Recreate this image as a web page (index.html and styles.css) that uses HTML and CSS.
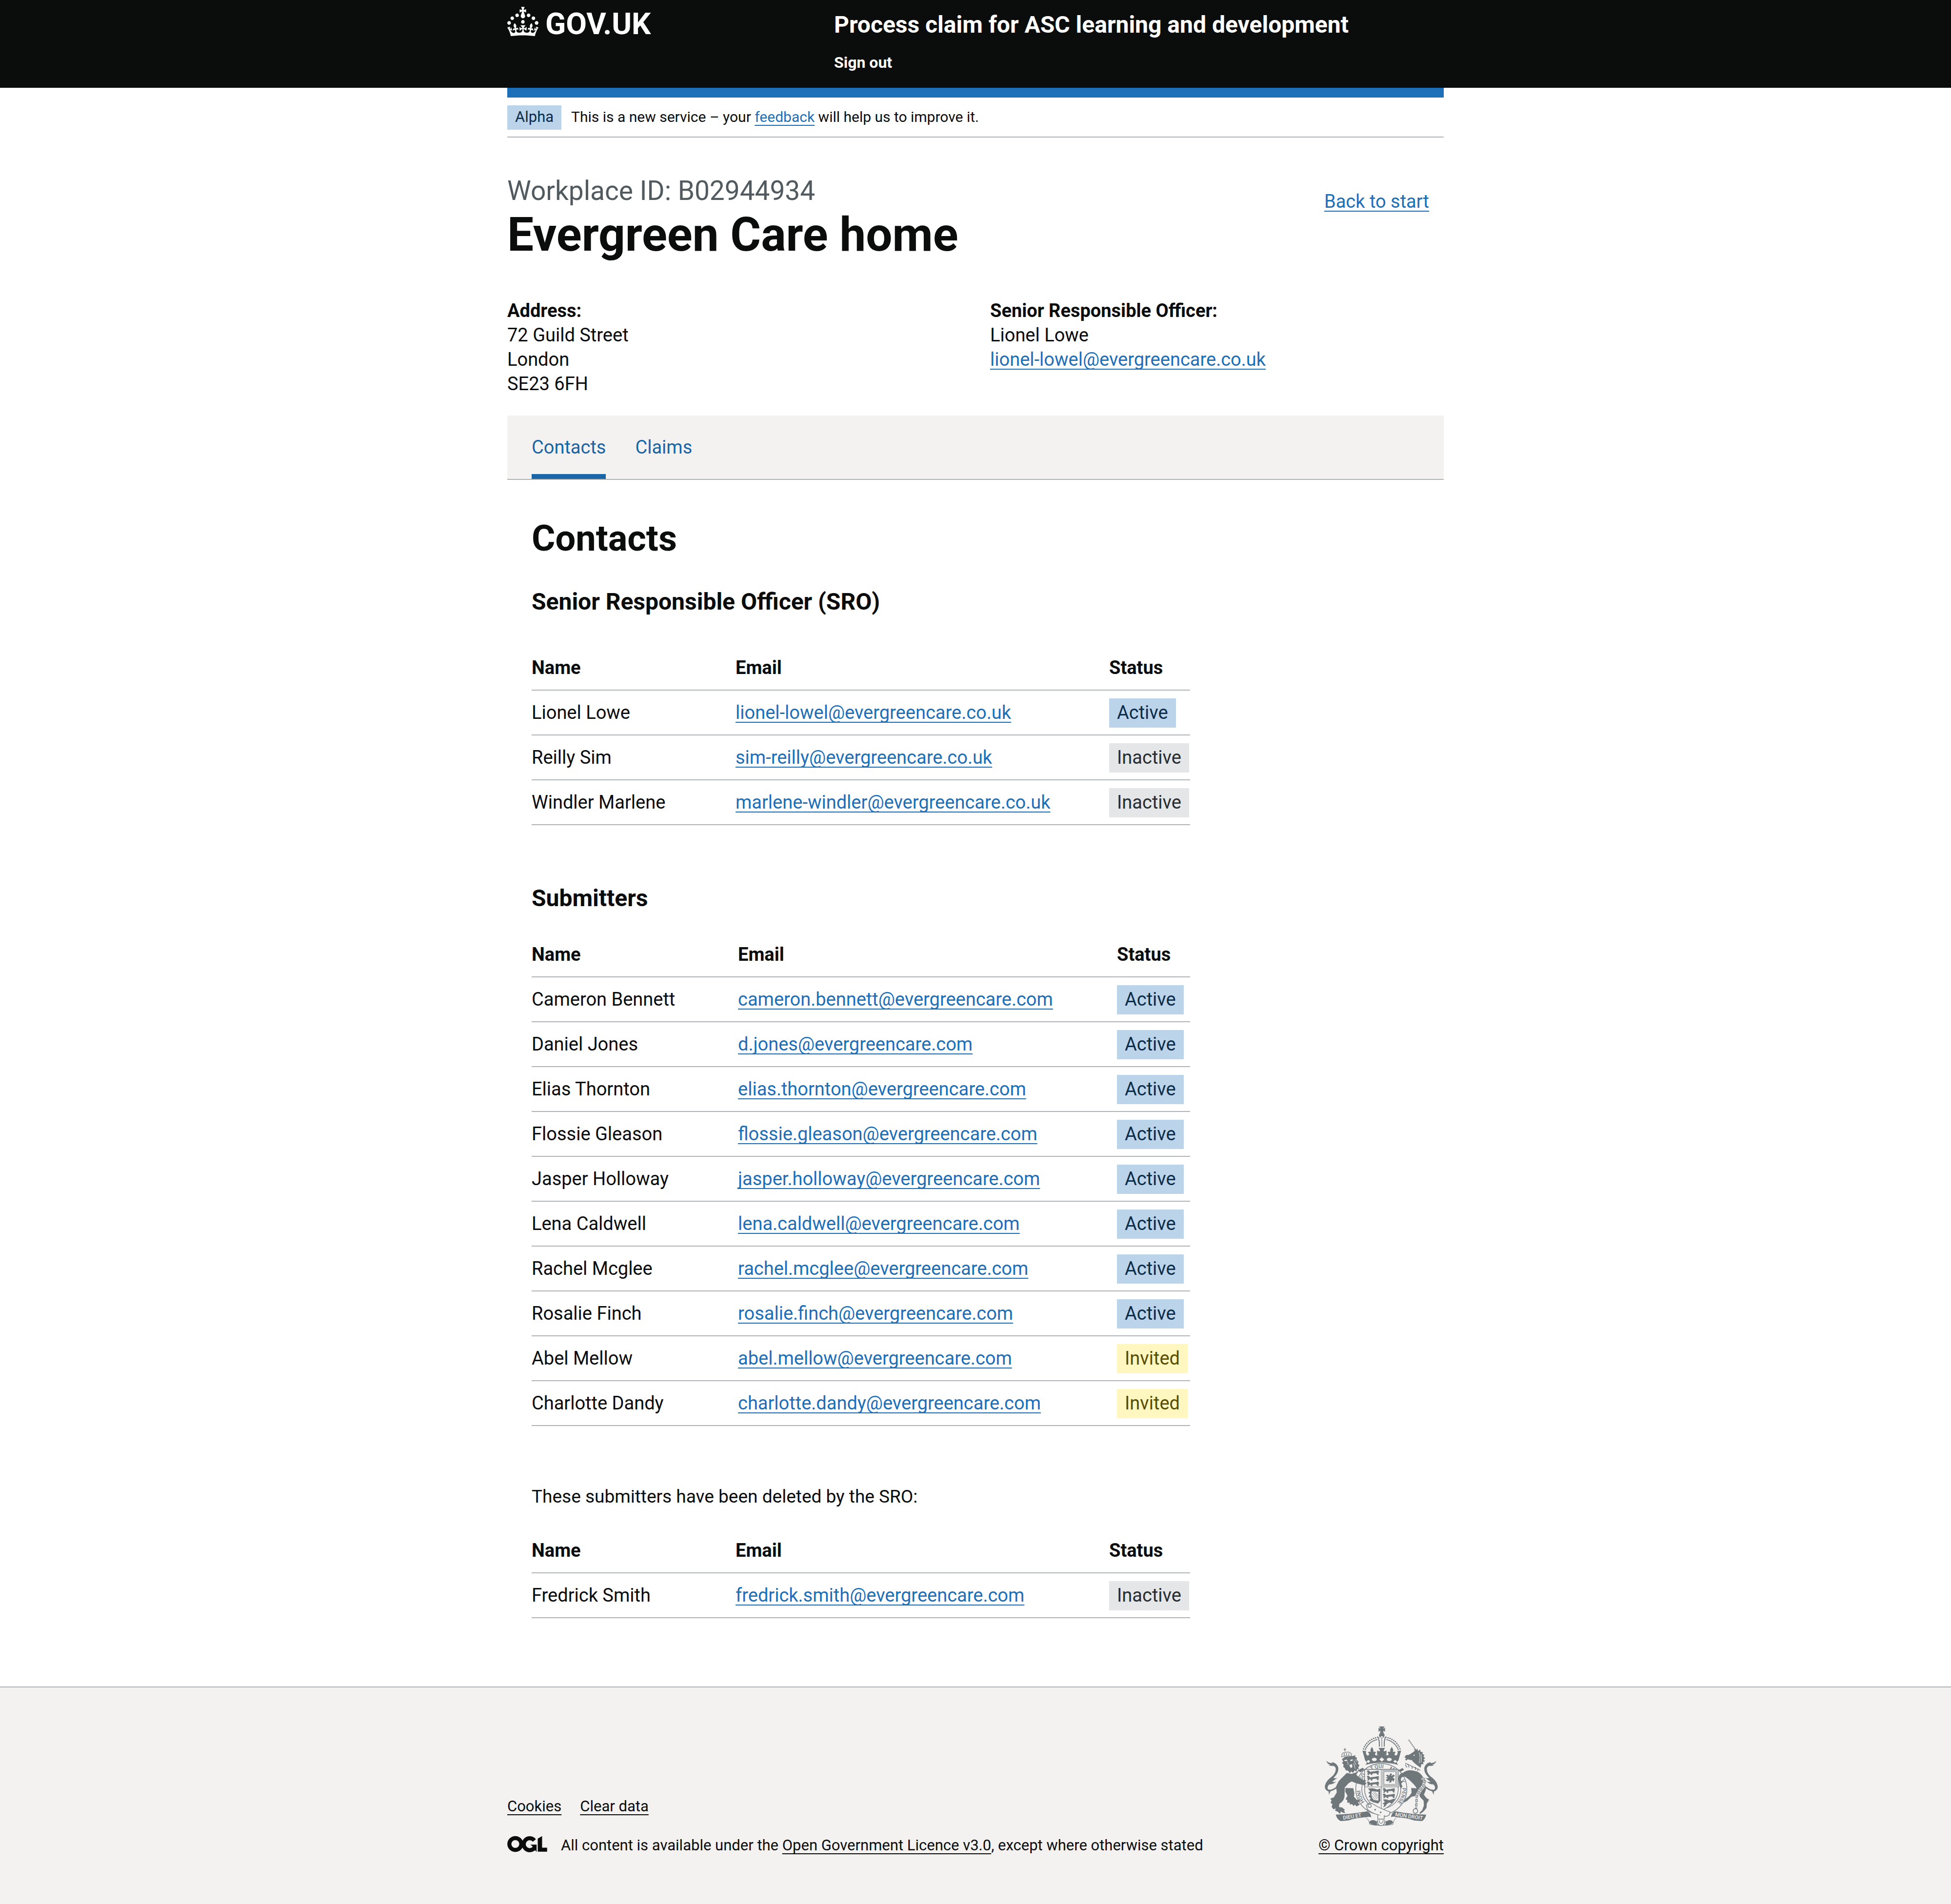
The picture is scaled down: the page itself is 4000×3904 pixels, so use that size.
FILE: index.html
```html
<!DOCTYPE html>
<html lang="en">
<head>
<meta charset="utf-8">
<meta name="viewport" content="width=device-width, initial-scale=1">
<title>Contacts – Process claim for ASC learning and development</title>
<link rel="stylesheet" href="styles.css">
</head>
<body>
<header class="header">
  <div class="container header-inner">
    <a class="logo" href="#">
      <svg class="logo-crown" viewBox="0 0 32 30" aria-hidden="true"><path fill="currentColor" fill-rule="evenodd" d="M22.6 10.4c-1 .4-2-.1-2.4-1-.4-.9.1-2 1-2.4.9-.4 2 .1 2.4 1s-.1 2-1 2.4m-5.9 6.7c-.9.4-2-.1-2.4-1-.4-.9.1-2 1-2.4.9-.4 2 .1 2.4 1s-.1 2-1 2.4m10.8-3.7c-1 .4-2-.1-2.4-1-.4-.9.1-2 1-2.4.9-.4 2 .1 2.4 1s0 2-1 2.4m3.3 4.8c-1 .4-2-.1-2.4-1-.4-.9.1-2 1-2.4.9-.4 2 .1 2.4 1s-.1 2-1 2.4M17 4.7l2.3 1.2V2.5l-2.3.7-.2-.2.9-3h-3.4l.9 3-.2.2c-.1.1-2.3-.7-2.3-.7v3.4L15 4.7c.1.1.1.2.2.2l-1.3 4c-.1.2-.1.4-.1.6 0 1.1.8 2 1.9 2.2h.7c1-.2 1.9-1.1 1.9-2.1 0-.2 0-.4-.1-.6l-1.3-4c-.1-.2 0-.2.1-.3m-7.6 5.7c.9.4 2-.1 2.4-1 .4-.9-.1-2-1-2.4-.9-.4-2 .1-2.4 1s0 2 1 2.4m-5 3c.9.4 2-.1 2.4-1 .4-.9-.1-2-1-2.4-.9-.4-2 .1-2.4 1s.1 2 1 2.4m-3.2 4.8c.9.4 2-.1 2.4-1 .4-.9-.1-2-1-2.4-.9-.4-2 .1-2.4 1s0 2 1 2.4m14.8 11c4.4 0 8.6.3 12.3.8 1.1-4.5 2.4-7 3.7-8.8l-2.5-.9c.2 1.3.3 1.9 0 2.7-.4-.4-.8-1.1-1.1-2.3l-1.2 4c.7-.5 1.3-.8 2-.9-1.1 2.5-2.6 3.1-3.5 3-1.1-.2-1.7-1.2-1.5-2.1.3-1.2 1.5-1.5 2.1-.1 1.1-2.3-.8-3-2-2.3 1.9-1.9 2.1-3.5.6-5.6-2.1 1.6-2.1 3.2-1.2 5.5-1.2-1.4-3.2-.6-2.5 1.6.9-1.4 2.1-.5 1.9.8-.2 1.1-1.7 2.1-3.5 1.9-2.7-.2-2.9-2.1-2.9-3.6.7-.1 1.9.5 2.9 1.9l.4-4.3c-1.1 1.1-2.1 1.4-3.2 1.4.4-1.2 2.1-3 2.1-3h-5.4s1.7 1.9 2.1 3c-1.1 0-2.1-.2-3.2-1.4l.4 4.3c1-1.4 2.2-2 2.9-1.9-.1 1.5-.2 3.4-2.9 3.6-1.9.2-3.4-.8-3.5-1.9-.2-1.3 1-2.2 1.9-.8.7-2.3-1.2-3-2.5-1.6.9-2.2.9-3.9-1.2-5.5-1.5 2-1.3 3.7.6 5.6-1.2-.7-3.1 0-2 2.3.6-1.4 1.8-1.1 2.1.1.2.9-.3 1.9-1.5 2.1-.9.2-2.4-.5-3.5-3 .6 0 1.2.3 2 .9l-1.2-4c-.3 1.1-.7 1.9-1.1 2.3-.3-.8-.2-1.4 0-2.7l-2.9.9C1.3 23 2.6 25.5 3.7 30c3.7-.5 7.9-.8 12.3-.8"/></svg>
      <span class="logo-text">GOV.UK</span>
    </a>
    <div class="header-content">
      <a class="service-name" href="#">Process claim for ASC learning and development</a>
      <nav aria-label="Account"><a class="sign-out" href="#">Sign out</a></nav>
    </div>
  </div>
</header>

<div class="container">
  <div class="phase-banner">
    <strong class="tag tag-blue phase-tag">Alpha</strong>
    <span>This is a new service – your <a class="link" href="#">feedback</a> will help us to improve it.</span>
  </div>

  <main class="main">
    <div class="title-row">
      <div>
        <span class="caption">Workplace ID: B02944934</span>
        <h1 class="heading-xl">Evergreen Care home</h1>
      </div>
      <a class="link back-link" href="#">Back to start</a>
    </div>

    <div class="details">
      <address class="details-item"><strong>Address:</strong><br>72 Guild Street<br>London<br>SE23 6FH</address>
      <div class="details-item"><strong>Senior Responsible Officer:</strong><br>Lionel Lowe<br><a class="link" href="#">lionel-lowel@evergreencare.co.uk</a></div>
    </div>

    <nav class="tabs" aria-label="Workplace">
      <a class="tab tab-current" href="#" aria-current="page">Contacts</a>
      <a class="tab" href="#">Claims</a>
    </nav>

    <div class="panel">
      <h2 class="heading-l">Contacts</h2>

      <h3 class="heading-m heading-spaced">Senior Responsible Officer (SRO)</h3>
      <table class="table">
        <colgroup><col class="col-name"><col class="col-email"><col></colgroup>
        <thead><tr><th scope="col">Name</th><th scope="col">Email</th><th scope="col">Status</th></tr></thead>
        <tbody>
          <tr><td>Lionel Lowe</td><td><a class="link" href="#">lionel-lowel@evergreencare.co.uk</a></td><td><strong class="tag tag-blue">Active</strong></td></tr>
          <tr><td>Reilly Sim</td><td><a class="link" href="#">sim-reilly@evergreencare.co.uk</a></td><td><strong class="tag tag-grey">Inactive</strong></td></tr>
          <tr><td>Windler Marlene</td><td><a class="link" href="#">marlene-windler@evergreencare.co.uk</a></td><td><strong class="tag tag-grey">Inactive</strong></td></tr>
        </tbody>
      </table>

      <h3 class="heading-m">Submitters</h3>
      <table class="table table-submitters">
        <colgroup><col class="col-name"><col class="col-email"><col></colgroup>
        <thead><tr><th scope="col">Name</th><th scope="col">Email</th><th scope="col">Status</th></tr></thead>
        <tbody>
          <tr><td>Cameron Bennett</td><td><a class="link" href="#">cameron.bennett@evergreencare.com</a></td><td><strong class="tag tag-blue">Active</strong></td></tr>
          <tr><td>Daniel Jones</td><td><a class="link" href="#">d.jones@evergreencare.com</a></td><td><strong class="tag tag-blue">Active</strong></td></tr>
          <tr><td>Elias Thornton</td><td><a class="link" href="#">elias.thornton@evergreencare.com</a></td><td><strong class="tag tag-blue">Active</strong></td></tr>
          <tr><td>Flossie Gleason</td><td><a class="link" href="#">flossie.gleason@evergreencare.com</a></td><td><strong class="tag tag-blue">Active</strong></td></tr>
          <tr><td>Jasper Holloway</td><td><a class="link" href="#">jasper.holloway@evergreencare.com</a></td><td><strong class="tag tag-blue">Active</strong></td></tr>
          <tr><td>Lena Caldwell</td><td><a class="link" href="#">lena.caldwell@evergreencare.com</a></td><td><strong class="tag tag-blue">Active</strong></td></tr>
          <tr><td>Rachel Mcglee</td><td><a class="link" href="#">rachel.mcglee@evergreencare.com</a></td><td><strong class="tag tag-blue">Active</strong></td></tr>
          <tr><td>Rosalie Finch</td><td><a class="link" href="#">rosalie.finch@evergreencare.com</a></td><td><strong class="tag tag-blue">Active</strong></td></tr>
          <tr><td>Abel Mellow</td><td><a class="link" href="#">abel.mellow@evergreencare.com</a></td><td><strong class="tag tag-yellow">Invited</strong></td></tr>
          <tr><td>Charlotte Dandy</td><td><a class="link" href="#">charlotte.dandy@evergreencare.com</a></td><td><strong class="tag tag-yellow">Invited</strong></td></tr>
        </tbody>
      </table>

      <p class="body">These submitters have been deleted by the SRO:</p>
      <table class="table">
        <colgroup><col class="col-name"><col class="col-email"><col></colgroup>
        <thead><tr><th scope="col">Name</th><th scope="col">Email</th><th scope="col">Status</th></tr></thead>
        <tbody>
          <tr><td>Fredrick Smith</td><td><a class="link" href="#">fredrick.smith@evergreencare.com</a></td><td><strong class="tag tag-grey">Inactive</strong></td></tr>
        </tbody>
      </table>
    </div>
  </main>
</div>

<footer class="footer">
  <div class="container footer-inner">
    <div class="footer-meta">
      <nav class="footer-links" aria-label="Support links">
        <a class="footer-link" href="#">Cookies</a>
        <a class="footer-link" href="#">Clear data</a>
      </nav>
      <div class="licence">
        <svg class="ogl" viewBox="59 72 248 102" role="img" aria-label="Open Government Licence">
          <g fill="none" stroke="currentColor" stroke-width="25">
            <circle cx="109" cy="123" r="37"/>
            <path d="M227 101A37 37 0 1 0 230 143"/>
          </g>
          <path fill="currentColor" d="M203 127H241V172L231 161L219 168V141ZM248 90L275 74V146H306V171H248Z"/>
        </svg>
        <span>All content is available under the <a class="footer-link" href="#">Open Government Licence v3.0</a>, except where otherwise stated</span>
      </div>
    </div>
    <a class="copyright" href="#">
      <svg class="arms" viewBox="42 30 696 612" role="img" aria-label="Royal coat of arms">
        <defs>
          <path id="ring" d="M390 544A129 129 0 0 1 390 286A129 129 0 0 1 390 544"/>
          <path id="passant" d="M0 4C6-3 14-2 18 4L22 9C34 3 46 6 58 3L70 0L78 4L72 8L78 14L70 17L76 25L66 26L60 17C50 16 42 19 34 19L36 27L25 27L24 19C18 20 14 23 12 28L2 27L10 19L0 16L8 12Z"/>
          <g id="half-crown">
            <path d="M281 167Q302 110 368 96" fill="none" stroke="currentColor" stroke-width="9" stroke-linecap="round" stroke-dasharray="0 13"/>
            <path d="M290 176Q310 124 366 110" fill="none" stroke="currentColor" stroke-width="5"/>
            <path d="M372 96Q380 126 378 154" fill="none" stroke="currentColor" stroke-width="6"/>
            <path d="M274 178L298 182Q292 190 298 202Q304 214 314 204Q318 196 308 192Q314 180 326 188Q318 174 332 156Q346 174 340 188Q352 180 358 192Q348 196 352 204Q362 212 376 202L364 206V178L380 184Q384 174 372 162H393V252Q340 254 293 266L302 252L290 238Z"/>
            <ellipse cx="347" cy="233" rx="15" ry="10" class="arms-light"/>
            <path d="M298 246L310 236L322 244L312 254Z" class="arms-light"/>
          </g>
          <path id="tail" d="M52 240Q66 258 90 254L84 248Q112 252 124 278Q132 310 104 338L96 346Q108 352 122 346Q100 360 88 370Q98 374 112 368Q96 386 70 386Q54 400 62 416Q80 428 120 396L124 404Q98 424 78 428L68 450L66 430Q38 420 44 392Q52 362 84 340Q110 318 110 292Q108 272 92 272Q76 274 66 268L78 266Q56 262 52 240Z"/>
        </defs>
        <g fill="currentColor">
          <path d="M375 30H411Q402 38 401 44Q407 43 413 37V63Q407 57 401 56Q402 64 406 68H380Q384 64 385 56Q379 57 373 63V37Q379 43 385 44Q384 38 375 30Z"/>
          <circle cx="393" cy="84" r="17"/>
          <circle cx="393" cy="96" r="7" class="arms-light"/>
          <path d="M393 102V154" fill="none" stroke="currentColor" stroke-width="8" stroke-linecap="round" stroke-dasharray="0 12"/>
          <use href="#half-crown"/>
          <use href="#half-crown" transform="translate(786 0) scale(-1 1)"/>
          <path d="M393 220L408 233L393 246L378 233Z" class="arms-light"/>
          <use href="#tail"/>
          <use href="#tail" transform="translate(780 0) scale(-1 1)"/>
        </g>

        <g fill="none" stroke="currentColor" stroke-width="4">
          <circle cx="390" cy="415" r="157" class="arms-ground"/>
          <circle cx="390" cy="415" r="120"/>
        </g>
        <g class="arms-motto" fill="currentColor">
          <text><textPath href="#ring" startOffset="118">HONI</textPath></text>
          <text><textPath href="#ring" startOffset="256">SO</textPath></text>
          <text><textPath href="#ring" startOffset="340">T QUI</textPath></text>
          <text><textPath href="#ring" startOffset="454">M</textPath></text>
          <text><textPath href="#ring" startOffset="552">Y</textPath></text>
          <text><textPath href="#ring" startOffset="600">PENSE</textPath></text>
        </g>

        <path class="arms-ground" stroke="currentColor" stroke-width="4" d="M287 294H494V420Q490 500 390 548Q290 500 287 420Z"/>
        <g fill="none" stroke="currentColor" stroke-width="3">
          <path d="M390 294V548M287 402H494"/>
          <path d="M399 301H486V394H399ZM406 308H479V387H406Z"/>
        </g>
        <g fill="currentColor">
          <use href="#passant" x="300" y="301"/><use href="#passant" x="300" y="335"/><use href="#passant" x="300" y="369"/>
          <use href="#passant" x="398" y="410"/><use href="#passant" x="398" y="444"/>
          <path d="M400 480L416 478L440 484L468 474L476 480L462 492L456 504L438 498L424 508L416 520L402 528L408 510L398 504L412 494Z"/>
          <path d="M418 330L430 326L438 334L446 318L456 322L450 334L466 326L474 334L460 344L472 352L466 370L456 360L450 374L438 376L442 362L426 368L416 358L430 352L416 344L430 342Z"/>
          <path d="M308 412L338 410L366 418L384 412V488L370 504L340 496L316 484L326 472L312 462L322 448L310 438L322 428Z"/>
          <path class="arms-light" d="M332 428L372 432V486L344 482Q322 460 332 428Z"/>
          <path fill="none" stroke="currentColor" stroke-width="3" d="M334 440L366 478M342 434L370 468M352 434L370 456M330 454L354 480"/>
        </g>

        <g fill="currentColor">
          <path d="M148 232L166 216L212 212L232 206L228 216L240 222L238 234L250 246L246 258L256 270L248 280L252 294L240 292L238 308L226 300L216 316L206 306L196 318L186 302L172 300L164 284L156 280L158 264L148 254L156 246Z"/>
          <path class="arms-light" d="M160 238L176 234L184 240L168 244ZM198 236L212 232L216 238L202 244ZM194 266L210 262L212 280L204 286L196 276Z"/>
          <path d="M180 246Q190 256 184 266M222 240L236 268M228 232L244 250M220 256L230 290" class="arms-cut"/>
          <path d="M148 216Q144 190 166 192Q188 180 206 198L206 214Q176 206 148 216Z" fill="none" stroke="currentColor" stroke-width="6" stroke-dasharray="5 3"/>
          <path d="M166 162V184M158 172H174M176 194V208M162 196V210M190 196V208" stroke="currentColor" stroke-width="4"/>
          <path d="M178 316L206 322L232 314L254 298L236 326L256 346L280 360L298 362L290 372L300 382L290 386L294 396L280 390L262 386L232 378L208 368L190 378L166 404L164 446Q168 484 132 506L130 526L148 528L166 542L160 550L170 562L152 560L142 552L136 568L122 554L106 548L110 534L96 540L84 524L90 508L78 500L84 484L76 474L98 466L116 436L112 398L128 366Z"/>
          <path d="M170 408L218 410L224 440L222 462L240 482L262 480L254 492L246 498L258 510L238 522L228 510L220 520L210 508L196 510L194 496L182 502L180 482L170 478L182 456L168 430Z"/>
          <path d="M244 300L276 284L286 294L262 312Z"/>
        </g>

        <g fill="currentColor">
          <path d="M558 112L602 174" stroke="currentColor" stroke-width="6" stroke-dasharray="8 3"/>
          <path d="M596 180L590 168L604 174L612 166L616 182L628 172L632 186L646 188L642 198L656 206L648 214L660 226L650 232L658 244L646 250L650 262L636 262L632 284Q604 266 584 246Q578 234 568 236L552 232L544 240L536 232L544 226L532 220L542 206L560 204L580 192Z"/>
          <circle cx="592" cy="207" r="4" class="arms-light"/>
          <path d="M622 190Q634 220 622 256M634 200Q642 224 634 252" class="arms-cut"/>
          <path d="M538 256L630 300M538 266L548 284M556 262L560 284M578 272L580 290M600 280L600 296M616 288L612 302" fill="none" stroke="currentColor" stroke-width="6" stroke-dasharray="7 3"/>
          <path d="M494 300L520 286L530 296L510 308Z"/>
          <path d="M496 360Q490 322 524 314Q552 292 590 302L614 308Q640 324 650 350L662 380L664 420L652 450L668 470L684 480L670 504L668 530L654 548L640 560L628 568L624 562L642 544L652 516L650 486L630 466L616 436Q612 410 590 386Q556 350 534 338Q508 338 510 362L522 372L512 382L520 398L512 412L502 398Z"/>
          <path d="M574 408L616 412L628 440L610 456L576 462L548 488L524 500L538 476L562 458L576 438Z"/>
        </g>
        <path d="M640 344L660 360L650 396L630 420L608 460L604 536" fill="none" class="arms-chain-ground"/>
        <path d="M640 344L660 360L650 396L630 420L608 460L604 536" fill="none" stroke="currentColor" stroke-width="13" stroke-dasharray="20 6"/>
        <path d="M640 344L660 360L650 396L630 420L608 460L604 536" fill="none" class="arms-chain-hole"/>
        <circle cx="600" cy="550" r="14" fill="none" stroke="currentColor" stroke-width="5"/>

        <path class="arms-ground" stroke="currentColor" stroke-width="4" d="M298 516Q310 496 334 504Q384 536 444 556L440 572Q424 588 402 580Q340 572 304 540Z"/>
        <circle cx="318" cy="518" r="10" fill="none" stroke="currentColor" stroke-width="4"/>
        <g fill="currentColor"><circle cx="352" cy="542" r="5"/><circle cx="386" cy="558" r="5"/></g>
        <g fill="currentColor">
          <path d="M110 572Q210 570 304 551Q326 562 328 588Q310 584 300 588Q230 592 188 608L140 612Q116 600 110 572Z"/>
          <path d="M666 572Q570 570 474 551Q452 562 450 588Q466 580 480 588Q550 592 592 608L640 612Q660 600 666 572Z"/>
          <path d="M316 624Q316 604 344 606L364 614L364 632L384 638Q336 640 316 624ZM462 624Q462 604 438 606L416 614L416 632L396 638Q442 640 462 624Z"/>
          <path d="M298 594Q314 600 318 632Q350 640 388 638Q430 640 462 632Q466 600 482 594" fill="none" stroke="currentColor" stroke-width="3"/>
        </g>
        <path d="M368 576V600H408V576M366 606Q366 640 388 640Q412 640 412 606M376 606Q378 626 388 626Q400 626 402 606" class="arms-ground" stroke="currentColor" stroke-width="4"/>
        <g class="arms-ribbon">
          <text transform="translate(156 603) rotate(-9)">DIEU ET</text>
          <text transform="translate(474 581) rotate(8)">MON DROIT</text>
        </g>
      </svg>
      <span class="copyright-text">© Crown copyright</span>
    </a>
  </div>
</footer>
</body>
</html>
```
FILE: styles.css
```css
:root {
  --black: #0b0c0c;
  --blue: #1d70b8;
  --tab-blue: #1a65a6;
  --border: #b1b4b6;
  --grey-bg: #f3f2f1;
  --secondary: #505a5f;
  --arms: #6f777b;
}

* { box-sizing: border-box; }

body {
  margin: 0;
  background: #fff;
  color: var(--black);
  font-family: Roboto, "Liberation Sans", Arial, sans-serif;
  font-size: 38px;
  line-height: 50px;
}

h1, h2, h3, p { margin: 0; }

.container {
  max-width: 1920px;
  margin: 0 auto;
}

.link {
  color: var(--blue);
  text-decoration: underline;
  text-decoration-thickness: 2px;
  text-decoration-skip-ink: none;
  text-underline-offset: 6px;
}

/* Header */
.header {
  background: var(--black);
  color: #fff;
}

.header-inner {
  display: grid;
  grid-template-columns: 670px 1fr;
  padding: 14px 0 32px;
}

.header a {
  color: inherit;
  text-decoration: none;
}

.logo {
  display: flex;
  align-items: flex-start;
  gap: 14px;
}

.logo-crown {
  width: 64px;
  height: 60px;
}

.logo-text {
  font-size: 62px;
  font-weight: 700;
  line-height: 70px;
}

.header-content {
  display: flex;
  flex-direction: column;
  gap: 32px;
  padding-top: 12px;
}

.service-name {
  font-size: 48px;
  font-weight: 700;
}

.sign-out {
  display: block;
  font-size: 32px;
  font-weight: 700;
  line-height: 40px;
}

/* Tags */
.tag {
  display: inline-block;
  margin: -4px 0 -6px;
  padding: 4px 16px 6px;
  font-weight: 400;
}

.tag-blue { background: #bbd4ea; color: #0c2d4a; }
.tag-grey { background: #e5e6e7; color: #282d30; }
.tag-yellow { background: #fff7bf; color: #594d00; }

/* Phase banner */
.phase-banner {
  display: flex;
  align-items: baseline;
  gap: 20px;
  padding: 16px 0 14px;
  border-top: 20px solid var(--blue);
  border-bottom: 2px solid var(--border);
  font-size: 30px;
  line-height: 40px;
}

.phase-tag {
  margin: 0;
  font-size: 31px;
}

/* Page heading */
.main { padding: 79px 0 140px; }

.title-row {
  display: flex;
  justify-content: space-between;
  align-items: flex-start;
}

.caption {
  display: block;
  margin-bottom: 10px;
  color: var(--secondary);
  font-size: 55px;
  line-height: 60px;
}

.heading-xl {
  font-size: 96px;
  line-height: 100px;
}

.back-link { margin: 27px 30px 0 0; }

.details {
  display: grid;
  grid-template-columns: 990px 1fr;
  margin: 81px 0 40px;
}

.details-item { font-style: normal; }

/* Tabs */
.tabs {
  display: flex;
  gap: 60px;
  padding: 0 50px;
  background: var(--grey-bg);
  border-bottom: 2px solid var(--border);
}

.tab {
  padding: 40px 0 30px;
  border-bottom: 10px solid transparent;
  color: var(--tab-blue);
  text-decoration: none;
}

.tab-current { border-bottom-color: var(--tab-blue); }

/* Contacts panel */
.panel {
  max-width: 1400px;
  padding: 80px 0 0 50px;
}

.heading-l {
  margin-bottom: 60px;
  font-size: 74px;
  line-height: 80px;
}

.heading-m {
  margin-bottom: 40px;
  font-size: 48px;
  line-height: 60px;
}

.heading-spaced { margin-bottom: 60px; }

.body {
  margin: 0 0 40px;
  font-size: 37px;
}

.table {
  width: 100%;
  border-collapse: separate;
  border-spacing: 0;
  table-layout: fixed;
}

.table + * { margin-top: 120px; }

.col-name { width: 418px; }
.col-email { width: 766px; }
.table-submitters .col-name { width: 423px; }
.table-submitters .col-email { width: 777px; }

.table th,
.table td {
  padding: 20px 0;
  border-bottom: 2px solid var(--border);
  text-align: left;
  vertical-align: top;
  white-space: nowrap;
}

/* Footer */
.footer {
  background: var(--grey-bg);
  border-top: 2px solid var(--border);
  font-size: 31px;
  line-height: 40px;
}

.footer-inner {
  display: flex;
  justify-content: space-between;
  align-items: flex-end;
  padding: 80px 0 100px;
}

.footer-link,
.copyright-text {
  color: inherit;
  text-decoration: underline;
  text-decoration-thickness: 2px;
  text-decoration-skip-ink: none;
  text-underline-offset: 6px;
}

.footer-links {
  display: flex;
  gap: 38px;
  margin-bottom: 40px;
}

.licence {
  display: flex;
  gap: 28px;
}

.ogl {
  width: 82px;
  height: 34px;
}

.copyright {
  display: flex;
  flex-direction: column;
  align-items: center;
  gap: 20px;
  color: inherit;
  text-decoration: none;
}

/* Coat of arms */
.arms {
  width: 232px;
  height: 204px;
  color: var(--arms);
}

.arms-light { fill: var(--grey-bg); }
.arms-ground { fill: var(--grey-bg); }
.arms-cut { fill: none; stroke: var(--grey-bg); stroke-width: 3px; }
.arms-chain-ground { stroke: var(--grey-bg); stroke-width: 20px; }
.arms-chain-hole { stroke: var(--grey-bg); stroke-width: 5px; stroke-dasharray: 12px 14px; stroke-dashoffset: -4px; }
.arms-motto { font-size: 32px; font-weight: 500; }
.arms-ribbon { fill: var(--grey-bg); font-size: 32px; font-weight: 500; }
```
